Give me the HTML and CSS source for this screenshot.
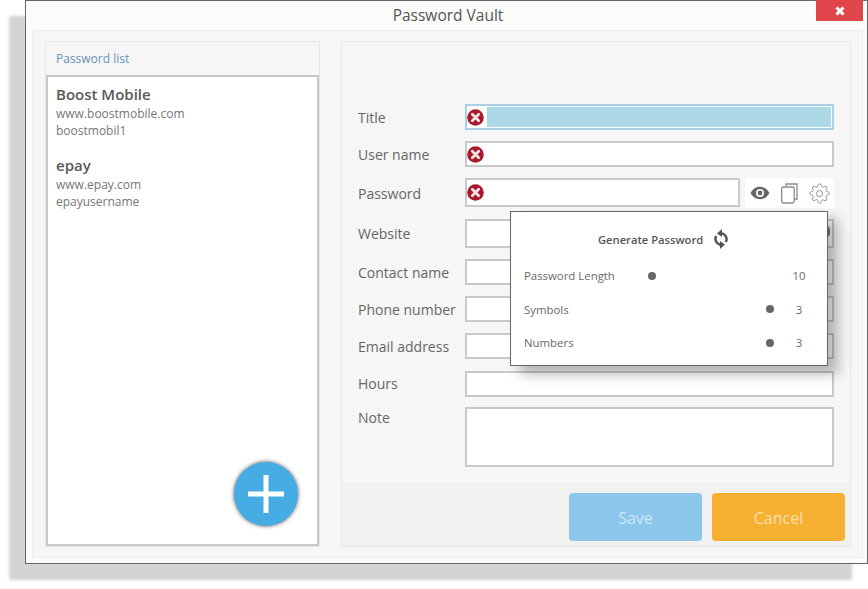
FILE: index.html
```html
<!DOCTYPE html>
<html lang="en">
<head>
<meta charset="utf-8">
<title>Password Vault</title>
<link rel="stylesheet" href="styles.css">
</head>
<body>
<svg class="defs" width="0" height="0" aria-hidden="true">
  <symbol id="err" viewBox="0 0 16 16">
    <circle cx="8" cy="8" r="7.8" fill="#a9182b"/>
    <path d="M5 5l6 6M11 5l-6 6" stroke="#f4e4e4" stroke-width="2.600" stroke-linecap="round"/>
  </symbol>
</svg>
<div class="window">
  <header class="titlebar">
    <h1 class="title">Password Vault</h1>
    <button class="close" aria-label="Close">
      <svg width="10" height="10" viewBox="0 0 10 10"><path d="M1.500 1.500l7 7M8.500 1.500l-7 7" stroke="#fff" stroke-width="3"/></svg>
    </button>
  </header>
  <div class="frame">
    <section class="listpanel">
      <div class="listhead">Password list</div>
      <div class="list">
        <div class="entry">
          <div class="entry-name">Boost Mobile</div>
          <div class="entry-line">www.boostmobile.com</div>
          <div class="entry-line">boostmobil1</div>
        </div>
        <div class="entry">
          <div class="entry-name">epay</div>
          <div class="entry-line">www.epay.com</div>
          <div class="entry-line">epayusername</div>
        </div>
        <button class="fab" aria-label="Add">
          <svg width="36" height="38" viewBox="0 0 36 38"><path d="M18 0v38M0 19h36" stroke="#fff" stroke-width="5"/></svg>
        </button>
      </div>
    </section>
    <section class="detail">
      <div class="form">
        <label class="label">Title</label>
        <div class="input input-focus">
          <svg class="err"><use href="#err"/></svg>
          <div class="selection"></div>
        </div>
        <label class="label">User name</label>
        <div class="input"><svg class="err"><use href="#err"/></svg></div>
        <label class="label label-pw">Password</label>
        <div class="pwrow">
          <div class="input input-pw"><svg class="err"><use href="#err"/></svg></div>
          <div class="tools">
            <svg width="20" height="14" viewBox="0 0 20 14"><path d="M0.500 7C3 2.600 6.300 0.800 10 0.800S17 2.600 19.500 7C17 11.400 13.700 13.200 10 13.200S3 11.400 0.500 7Z" fill="#666"/><circle cx="10" cy="7" r="4" fill="#fff"/><circle cx="10" cy="7" r="2.400" fill="#666"/></svg>
            <svg width="17" height="21" viewBox="0 0 17 21" fill="none" stroke="#8a8a8a" stroke-width="1.300"><path d="M5 3V1h11v15h-2.500"/><rect x="0.700" y="4" width="12.500" height="16" rx="1.500"/></svg>
            <svg width="21" height="21" viewBox="0 0 24 24" fill="none" stroke="#8f8f8f" stroke-width="1.100"><circle cx="12" cy="12" r="3.500"/><path d="M19.400 15a1.650 1.650 0 0 0 .33 1.820l.06.06a2 2 0 1 1-2.830 2.830l-.06-.06a1.650 1.650 0 0 0-2.800 1.170V21a2 2 0 1 1-4 0v-.09A1.650 1.650 0 0 0 7.300 19.400l-.06.06a2 2 0 1 1-2.830-2.830l.06-.06a1.650 1.650 0 0 0-1.170-2.800H3a2 2 0 1 1 0-4h.09A1.650 1.650 0 0 0 4.600 7.300l-.06-.06a2 2 0 1 1 2.830-2.830l.06.06a1.650 1.650 0 0 0 2.800-1.170V3a2 2 0 1 1 4 0v.09a1.650 1.650 0 0 0 2.800 1.170l.06-.06a2 2 0 1 1 2.830 2.830l-.06.06a1.650 1.650 0 0 0 1.170 2.800H21a2 2 0 1 1 0 4h-.09a1.650 1.650 0 0 0-1.510 1z"/></svg>
          </div>
        </div>
        <label class="label label-web">Website</label>
        <div class="input input-web"><span class="web-knob"></span></div>
        <label class="label">Contact name</label>
        <div class="input"></div>
        <label class="label">Phone number</label>
        <div class="input"></div>
        <label class="label">Email address</label>
        <div class="input"></div>
        <label class="label label-hours">Hours</label>
        <div class="input"></div>
        <label class="label label-note">Note</label>
        <div class="input input-note"></div>
      </div>
      <footer class="actions">
        <button class="btn btn-save">Save</button>
        <button class="btn btn-cancel">Cancel</button>
      </footer>
      <div class="popup">
        <div class="popup-head">
          <span>Generate Password</span>
          <svg width="16" height="20" viewBox="0 0 16 20" fill="none" stroke="#555" stroke-width="2.400"><path d="M7 4.400A5.800 5.800 0 0 1 12.800 13"/><path d="M9 15.600A5.800 5.800 0 0 1 3.200 7"/><path d="M9 0L4 4.400L9 8z" fill="#555" stroke="none"/><path d="M7 20L12 15.600L7 12z" fill="#555" stroke="none"/></svg>
        </div>
        <div class="gen-row">
          <span>Password Length</span>
          <span class="track"><i class="dot"></i></span>
          <span class="val">10</span>
        </div>
        <div class="gen-row">
          <span>Symbols</span>
          <span class="track track-end"><i class="dot"></i></span>
          <span class="val">3</span>
        </div>
        <div class="gen-row">
          <span>Numbers</span>
          <span class="track track-end"><i class="dot"></i></span>
          <span class="val">3</span>
        </div>
      </div>
    </section>
  </div>
</div>
</body>
</html>
```
FILE: styles.css
```css
* { box-sizing: border-box; }
html, body { margin: 0; height: 100%; }
body {
  width: 868px;
  height: 589px;
  overflow: hidden;
  background: #fff;
  padding-left: 25px;
  font-family: "Open Sans", "Noto Sans", "Liberation Sans", sans-serif;
  color: #666;
}
.defs { position: absolute; }
.window {
  width: 843px;
  height: 564px;
  background: #fbfbfa;
  border: 1px solid #666;
  box-shadow: -16px 16px 3px #d3d3d3;
  display: flex;
  flex-direction: column;
}
.titlebar {
  height: 29px;
  flex: none;
  display: flex;
  justify-content: center;
  align-items: center;
  position: relative;
  padding-left: 3px;
}
.title {
  margin: 0;
  font-size: 15.500px;
  font-weight: 400;
  color: #555;
  line-height: 29px;
}
.close {
  position: absolute;
  right: 4px;
  top: -1px;
  width: 47px;
  height: 21px;
  border: 0;
  padding: 0;
  background: #e04549;
  display: flex;
  align-items: center;
  justify-content: center;
}
.frame {
  margin-left: 6px;
  margin-right: 4px;
  height: 528px;
  flex: none;
  background: #f6f6f6;
  border: 1px solid #ececec;
  padding: 10px 12px;
  display: flex;
  gap: 21px;
}
.listpanel {
  width: 275px;
  height: 506px;
  flex: none;
  border: 1px solid #e6e6e6;
  display: flex;
  flex-direction: column;
}
.listhead {
  height: 33px;
  flex: none;
  padding-left: 10px;
  font-size: 12px;
  line-height: 33px;
  color: #6593b8;
}
.list {
  flex: 1;
  background: #fff;
  border: 2px solid #c8c8c8;
  position: relative;
  padding: 6px 8px;
}
.entry { margin-bottom: 15px; }
.entry-name {
  font-size: 15px;
  font-weight: 600;
  line-height: 22px;
  color: #595959;
}
.entry-line {
  font-size: 12px;
  line-height: 17px;
  color: #767676;
}
.fab {
  position: absolute;
  left: 186px;
  top: 385px;
  width: 64px;
  height: 64px;
  border: 0;
  padding: 0;
  border-radius: 50%;
  background: #45ace4;
  box-shadow: 0 0 4px #555;
  display: flex;
  align-items: center;
  justify-content: center;
}
.detail {
  width: 510px;
  height: 506px;
  flex: none;
  border: 1px solid #e6e6e6;
  position: relative;
  display: flex;
  flex-direction: column;
}
.form {
  height: 441px;
  flex: none;
  padding: 62px 16px 0;
  display: grid;
  grid-template-columns: 107px 369px;
  grid-template-rows: 37px 37px 41px 40px 37px 37px 38px 36px 59px;
  align-items: start;
}
.label {
  font-size: 14px;
  line-height: 24px;
  padding-top: 2px;
  color: #666;
}
.label-pw { padding-top: 4px; }
.label-web { padding-top: 3px; }
.label-hours { padding-top: 1px; }
.label-note { padding-top: 0; line-height: 22px; }
.input {
  height: 26px;
  background: #fff;
  border: 2px solid #c9c9c9;
  display: flex;
  align-items: center;
  position: relative;
}
.input-focus {
  border-color: #a9cfe8;
  padding: 1px;
  padding-left: 0;
}
.selection {
  flex: 1;
  align-self: stretch;
  background: #add8e6;
  margin-left: 3px;
}
.err { width: 17px; height: 17px; flex: none; }
.pwrow { display: flex; gap: 5px; height: 30px; }
.input-pw { width: 275px; height: 29px; }
.tools {
  flex: 1;
  height: 30px;
  background: #fff;
  display: flex;
  align-items: center;
  padding: 0 4px 0 5px;
  justify-content: space-between;
}
.input-web { height: 29px; }
.web-knob {
  position: absolute;
  right: 2px;
  top: 4px;
  width: 14px;
  height: 13px;
  border-radius: 5px;
  background: #777;
}
.input-note { height: 60px; }
.actions {
  flex: 1;
  background: #f1f1f1;
  padding: 10px 4px 5px 227px;
  display: flex;
  gap: 10px;
  align-items: flex-start;
}
.btn {
  width: 133px;
  height: 48px;
  border: 0;
  border-radius: 4px;
  padding-top: 2px;
  font-family: inherit;
  font-size: 16px;
  color: rgba(255, 255, 255, 0.6);
}
.btn-save { background: #8bc7ea; }
.btn-cancel { background: #f6b133; }
.popup {
  position: absolute;
  left: 168px;
  top: 169px;
  width: 318px;
  height: 155px;
  background: #fff;
  border: 1px solid #666;
  box-shadow: 10px 8px 12px rgba(0, 0, 0, 0.28);
  padding: 0 13px;
  font-size: 11.400px;
}
.popup-head {
  height: 40px;
  margin-top: 7px;
  padding-left: 74px;
  display: flex;
  align-items: center;
  gap: 10px;
  font-size: 11.200px;
  font-weight: 600;
  color: #555;
}
.gen-row {
  height: 33.500px;
  display: grid;
  grid-template-columns: 123px 128px 1fr;
  align-items: center;
  color: #6a6a6a;
}
.track { display: flex; align-items: center; padding: 0 1px; }
.track-end { justify-content: flex-end; }
.dot { width: 8px; height: 8px; border-radius: 50%; background: #666; display: block; }
.val { text-align: center; padding-left: 9px; }
```
